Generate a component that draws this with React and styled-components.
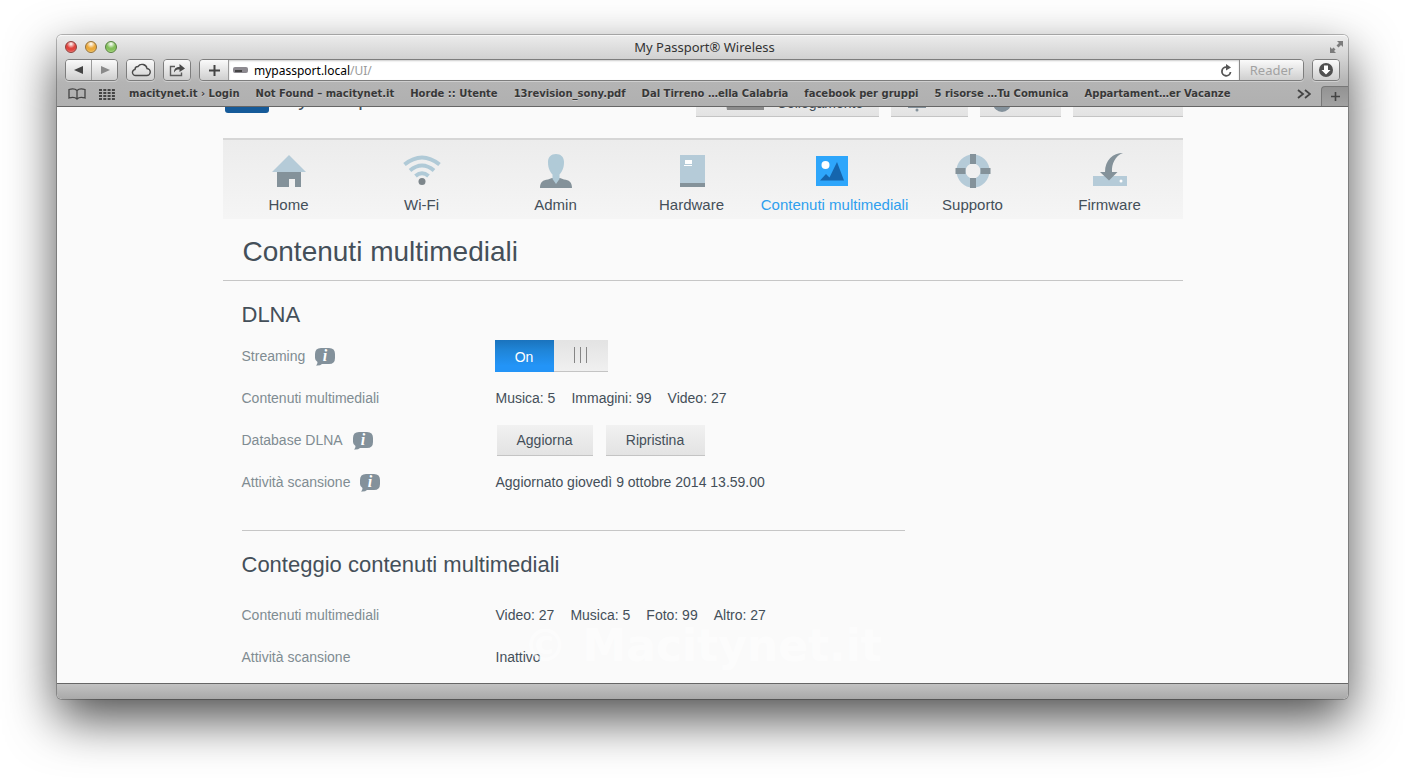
import React, { useState } from 'react';
import styled, { createGlobalStyle } from 'styled-components';

const GlobalStyle = createGlobalStyle`
  * {
    box-sizing: border-box;
  }
  body {
    margin: 0;
    background: #fff;
    font-family: "Liberation Sans", Arial, sans-serif;
    overflow: hidden;
  }
  button, input {
    font: inherit;
    color: inherit;
  }
`;

const Desktop = styled.div`
  min-height: 100vh;
  padding: 35px 57px 79px;
`;

const Window = styled.div`
  border-radius: 5px;
  background: #fafafa;
  box-shadow: 0 0 0 1px rgba(0, 0, 0, 0.25), 0 20px 50px rgba(0, 0, 0, 0.7);
`;

const Chrome = styled.header`
  border-radius: 5px 5px 0 0;
  border-top: 1px solid #f8f8f8;
  border-bottom: 1px solid #666;
  background: linear-gradient(#ebebeb 0, #d0d0d0 24px, #b4b4b4 46px, #b0b0b0 100%);
  font-family: "Lucida Grande", "Noto Sans", sans-serif;
  color: #333;
`;

const TitleBar = styled.div`
  display: grid;
  grid-template-columns: 1fr auto 1fr;
  align-items: center;
  height: 22px;
  padding: 0 4px 0 8px;
`;

const Lights = styled.div`
  display: flex;
  gap: 8px;
`;

const Light = styled.button`
  width: 12px;
  height: 12px;
  padding: 0;
  border: 1px solid ${(p) => p.$edge};
  border-radius: 50%;
  background: radial-gradient(circle at 50% 20%, #fff 0, ${(p) => p.$color} 45%, ${(p) => p.$color} 65%, ${(p) => p.$glow} 100%);
`;

const WindowTitle = styled.h1`
  margin: 0;
  font-size: 13px;
  font-weight: 400;
  line-height: 18px;
`;

const FullScreen = styled.button`
  justify-self: end;
  display: flex;
  padding: 0;
  border: 0;
  background: none;
`;

const Toolbar = styled.div`
  display: flex;
  gap: 8px;
  height: 24px;
  padding: 1px 8px;
`;

const ButtonGroup = styled.div`
  display: flex;
  border: 1px solid #7d7d7d;
  border-radius: 4px;
  overflow: hidden;
  box-shadow: 0 1px 0 #cfcfcf;
`;

const ToolButton = styled.button`
  display: flex;
  align-items: center;
  justify-content: center;
  width: ${(p) => p.$width || 27}px;
  padding: 0;
  border: 0;
  border-right: ${(p) => (p.$divided ? '1px solid #9a9a9a' : '0')};
  background: linear-gradient(#fafafa, #cfcfcf);
`;

const AddressGroup = styled(ButtonGroup)`
  flex: 1;
`;

const Address = styled.label`
  flex: 1;
  display: flex;
  align-items: center;
  padding: 0 7px 0 4px;
  background: #fff;
  box-shadow: inset 0 1px 2px #ccc;
  font-size: 12px;
  color: #9a9a9a;
`;

const AddressInput = styled.input`
  field-sizing: content;
  margin-left: 6px;
  padding: 0;
  border: 0;
  outline: 0;
  background: none;
  color: #000;
`;

const Reload = styled.button`
  display: flex;
  margin-left: auto;
  padding: 0;
  border: 0;
  background: none;
`;

const Reader = styled(ToolButton)`
  border-left: 1px solid #8a8a8a;
  font-size: 13px;
  color: #a2a2a2;
`;

const Bookmarks = styled.nav`
  display: flex;
  align-items: center;
  height: 24px;
  padding-left: 11px;
`;

const BookmarkIcons = styled.div`
  display: flex;
  align-items: center;
  gap: 13px;
  margin-right: 14px;
`;

const BookmarkList = styled.div`
  flex: 1;
  display: flex;
  gap: 16px;
  min-width: 0;
  white-space: nowrap;
`;

const Bookmark = styled.a`
  font-family: "Lucida Grande", "DejaVu Sans", sans-serif;
  font-size: 10px;
  font-weight: 700;
  line-height: 16px;
  color: #383838;
  text-decoration: none;
  text-shadow: 0 1px 0 rgba(255, 255, 255, 0.35);
`;

const IconButton = styled.button`
  display: flex;
  padding: 0;
  border: 0;
  background: none;
`;

const NewTab = styled.button`
  align-self: flex-end;
  display: flex;
  align-items: center;
  justify-content: center;
  width: 27px;
  height: 20px;
  margin-left: 10px;
  padding: 0;
  border: solid #777;
  border-width: 1px 0 0 1px;
  border-radius: 4px 0 0 0;
  background: linear-gradient(#939393, #a2a2a2);
`;

const Viewport = styled.main`
  overflow: hidden;
  position: relative;
  color: #444f59;
`;

const Page = styled.div`
  max-width: 960px;
  margin: -22px auto 0;
  padding-bottom: 5px;
`;

const PageHeader = styled.div`
  display: flex;
  align-items: flex-end;
  height: 32px;
  margin-bottom: 21px;
`;

const Logo = styled.div`
  width: 44px;
  height: 28px;
  margin: 0 13px 4px 2px;
  border-radius: 3px;
  background: #155a99;
`;

const Product = styled.div`
  font-size: 20px;
  line-height: 24px;
  margin-bottom: 6px;
`;

const HeaderActions = styled.div`
  display: flex;
  gap: 12px;
  margin-left: auto;
`;

const PanelButton = styled.button`
  display: flex;
  align-items: center;
  justify-content: center;
  gap: 13px;
  width: ${(p) => p.$width}px;
  height: 31px;
  padding: 0;
  border: 0;
  border-bottom: 1px solid #c4c4c4;
  background: linear-gradient(#f1f1f1, #e3e3e3);
  font-size: 14px;
`;

const HeaderButton = styled(PanelButton)`
  padding-top: 4px;
`;

const Tabs = styled.nav`
  display: grid;
  grid-template-columns: 132fr 134fr 134fr 138fr 148fr 128fr 146fr;
  border-top: 2px solid #d6d6d6;
  background: linear-gradient(#ececec, #f5f5f5);
`;

const Tab = styled.a`
  display: flex;
  flex-direction: column;
  align-items: center;
  gap: 7px;
  padding: 12px 0 5px;
  font-size: 15px;
  line-height: 19px;
  white-space: nowrap;
  text-decoration: none;
  color: ${(p) => (p.$active ? '#2f9fee' : '#444f59')};
`;

const PageTitle = styled.h2`
  margin: 0;
  padding: 17px 20px 12px;
  border-bottom: 1px solid #c6c6c6;
  font-size: 28px;
  font-weight: 400;
  line-height: 32px;
`;

const Section = styled.section`
  margin-left: 19px;
  padding-top: 21px;
`;

const SectionTitle = styled.h3`
  margin: 0 0 ${(p) => p.$space}px;
  font-size: 22px;
  font-weight: 400;
  line-height: 26px;
`;

const Row = styled.div`
  display: grid;
  grid-template-columns: 253px 1fr;
  align-items: center;
  height: 42px;
  font-size: 14px;
  line-height: 20px;
`;

const Label = styled.div`
  display: flex;
  align-items: center;
  gap: 10px;
  color: #808c92;
`;

const Value = styled.div`
  display: flex;
  gap: 16px;
  padding-left: 1px;
`;

const Actions = styled.div`
  display: flex;
  gap: 13px;
  padding-left: 2px;
`;

const Divider = styled.hr`
  width: 663px;
  margin: 27px 0 0 19px;
  border: 0;
  border-top: 1px solid #c6c6c6;
`;

const Switch = styled.label`
  position: relative;
  display: flex;
  width: 113px;
  height: 32px;
  flex-direction: ${(p) => (p.$on ? 'row' : 'row-reverse')};
`;

const SwitchInput = styled.input`
  position: absolute;
  inset: 0;
  width: 100%;
  height: 100%;
  margin: 0;
  opacity: 0;
`;

const SwitchText = styled.span`
  width: 59px;
  background: linear-gradient(#1a73bd, #1f84d6 30%, #2394f7 80%);
  color: #fff;
  line-height: 34px;
  text-align: center;
`;

const SwitchHandle = styled.span`
  flex: 1;
  display: flex;
  justify-content: center;
  gap: 5px;
  padding-top: 7px;
  border-bottom: 1px solid #c4c4c4;
  background: linear-gradient(#e3e3e3, #f0f0f0);
`;

const Grip = styled.i`
  width: 1px;
  height: 16px;
  background: #858585;
`;

const StatusBar = styled.footer`
  height: 16px;
  border-top: 1px solid #666;
  border-radius: 0 0 5px 5px;
  background: linear-gradient(#c2c2c2, #a9a9a9);
`;

const Watermark = styled.div`
  position: absolute;
  left: 0;
  right: 0;
  bottom: 9px;
  text-align: center;
  font-family: Verdana, "DejaVu Sans", sans-serif;
  font-size: 44px;
  font-weight: 700;
  line-height: 56px;
  color: rgba(255, 255, 255, 0.6);
  pointer-events: none;
`;

const Glyph = ({ w, h, children }) => (
  <svg width={w} height={h} viewBox={`0 0 ${w} ${h}`} aria-hidden="true">{children}</svg>
);

const HomeIcon = () => (
  <Glyph w={34} h={36}>
    <path d="M17 3 34 20H0z" fill="#b5cbd8" />
    <path d="M5 20h24v15h-6v-8h-6v8H5z" fill="#84929a" />
  </Glyph>
);

const WifiIcon = () => (
  <Glyph w={38} h={36}>
    <g fill="none" stroke="#b0cad7" strokeWidth="4">
      <path d="M1.500 12.500Q19-1.500 36.500 12.500" />
      <path d="M7 18.500Q19 8.500 31 18.500" />
      <path d="M12.500 24Q19 18.500 25.500 24" />
    </g>
    <circle cx="19" cy="29.500" r="3.500" fill="#7d868b" />
  </Glyph>
);

const AdminIcon = () => (
  <Glyph w={34} h={36}>
    <path d="M1 36c0-6 3-8 8-8.500l4-1.500h8l4 1.500c5 .5 8 2.500 8 8.500z" fill="#84929a" />
    <path d="M17 2c5 0 8 3 8 8 0 6-2 10-4.500 12.500V27L17 32l-3.500-5v-4.500C11 20 9 16 9 10c0-5 3-8 8-8z" fill="#b0cad7" />
  </Glyph>
);

const HardwareIcon = () => (
  <Glyph w={26} h={36}>
    <path d="M1 3h25v28H1z" fill="#b5cbd8" />
    <path d="M1 31h25v4H1z" fill="#84929a" />
    <path d="M6 8h7v4H6zM5 13h8v1H5z" fill="#fff" />
  </Glyph>
);

const MediaIcon = () => (
  <Glyph w={38} h={36}>
    <path d="M0 4h32v30H0z" fill="#2ea6fb" />
    <path d="M4 28.500 10 22l3.500 3.500L21 10l7 18.500z" fill="#1565ad" />
    <circle cx="9.500" cy="13" r="4" fill="#fff" />
  </Glyph>
);

const SupportIcon = () => (
  <Glyph w={36} h={36}>
    <circle cx="18" cy="19" r="12" fill="none" stroke="#b5cbd8" strokeWidth="9" />
    <path d="M15 2h6v10h-6zM15 26h6v10h-6zM.500 16h10v6h-10zM25.500 16h10v6h-10z" fill="#84929a" />
  </Glyph>
);

const FirmwareIcon = () => (
  <Glyph w={34} h={36}>
    <path d="M0 24h34v10H0z" fill="#b5cbd8" />
    <path d="M30 1C20 1 12 8 12 20H7l9 8.500L24.500 20H19C18.500 12 22 4 30 1z" fill="#84929a" />
    <circle cx="28" cy="29" r="1.500" fill="#fff" />
  </Glyph>
);

const InfoIcon = () => (
  <Glyph w={20} h={19}>
    <path d="M6 1h8q6 0 6 6v4q0 6-6 6H7q-2 2-6 1.500 1.500-1 1.500-3.500Q0 13.500 0 11V7q0-6 6-6z" fill="#83919b" />
    <text x="10" y="14" textAnchor="middle" fontFamily="Liberation Serif, serif" fontStyle="italic" fontWeight="700" fontSize="16" fill="#fff">i</text>
  </Glyph>
);

const tabs = [
  { name: 'Home', Icon: HomeIcon },
  { name: 'Wi-Fi', Icon: WifiIcon },
  { name: 'Admin', Icon: AdminIcon },
  { name: 'Hardware', Icon: HardwareIcon },
  { name: 'Contenuti multimediali', Icon: MediaIcon, active: true },
  { name: 'Supporto', Icon: SupportIcon },
  { name: 'Firmware', Icon: FirmwareIcon },
];

const bookmarks = [
  'macitynet.it › Login',
  'Not Found – macitynet.it',
  'Horde :: Utente',
  '13revision_sony.pdf',
  'Dal Tirreno …ella Calabria',
  'facebook per gruppi',
  '5 risorse …Tu Comunica',
  'Appartament…er Vacanze',
];

const BrowserChrome = () => (
  <Chrome>
    <TitleBar>
      <Lights>
        <Light aria-label="Close" $color="#e0453f" $glow="#ffaaa5" $edge="#8d3f3c" />
        <Light aria-label="Minimize" $color="#eba93c" $glow="#ffeb9c" $edge="#94713a" />
        <Light aria-label="Zoom" $color="#84c05c" $glow="#d8ffb0" $edge="#56803f" />
      </Lights>
      <WindowTitle>My Passport® Wireless</WindowTitle>
      <FullScreen aria-label="Full screen">
        <Glyph w={15} h={14}>
          <path d="M8 1h6v6l-2-2-2.500 2.500-2-2L10 3zM1 7l2 2 1.500-1.500 2 2L5 11l2 2H1z" fill="#7c7c7c" />
        </Glyph>
      </FullScreen>
    </TitleBar>
    <Toolbar>
      <ButtonGroup>
        <ToolButton aria-label="Back" $width={26} $divided>
          <Glyph w={10} h={10}><path d="M9 1v8L0 5z" fill="#444" /></Glyph>
        </ToolButton>
        <ToolButton aria-label="Forward" $width={25}>
          <Glyph w={10} h={10}><path d="M1 1v8l9-4z" fill="#8a8a8a" /></Glyph>
        </ToolButton>
      </ButtonGroup>
      <ButtonGroup>
        <ToolButton aria-label="iCloud">
          <Glyph w={20} h={14}>
            <path d="M5 12.500h10.500a3.500 3.500 0 0 0 .5-7A5 5 0 0 0 7 3.500 3 3 0 0 0 4 6.500a3 3 0 0 0 1 6z" fill="none" stroke="#4a4a4a" strokeWidth="1.400" />
          </Glyph>
        </ToolButton>
      </ButtonGroup>
      <ButtonGroup>
        <ToolButton aria-label="Share" $width={26}>
          <Glyph w={18} h={14}>
            <path d="M7 3.500H2.500v9h11V9.500" fill="none" stroke="#5c5c5c" strokeWidth="1.400" />
            <path d="M6 9.500C6 5.500 8 4 11.500 4V1L17 5.500 11.500 9V6.500C9 6.500 7.500 7 6 9.500z" fill="#4a4a4a" />
          </Glyph>
        </ToolButton>
      </ButtonGroup>
      <AddressGroup>
        <ToolButton aria-label="Add bookmark" $width={29} $divided>
          <Glyph w={11} h={11}><path d="M5.500 0v11M0 5.500h11" stroke="#444" strokeWidth="2" /></Glyph>
        </ToolButton>
        <Address>
          <Glyph w={15} h={6}>
            <rect width="15" height="6" rx="2" fill="#8d8a90" />
            <path d="M2 4h7" stroke="#444" strokeWidth="2" />
          </Glyph>
          <AddressInput aria-label="Address" defaultValue="mypassport.local" />
          <span>/UI/</span>
          <Reload aria-label="Reload">
            <Glyph w={12} h={13}>
              <path d="M10.500 8A4.300 4.300 0 1 1 6.500 3.200" fill="none" stroke="#555" strokeWidth="1.800" />
              <path d="M6 0l5 3.500L6 6.500z" fill="#555" />
            </Glyph>
          </Reload>
        </Address>
        <Reader $width={64}>Reader</Reader>
      </AddressGroup>
      <ButtonGroup>
        <ToolButton aria-label="Downloads" $width={26}>
          <Glyph w={14} h={14}>
            <circle cx="7" cy="7" r="7" fill="#505050" />
            <path d="M5 2.500h4V7h2.500L7 11.500 2.500 7H5z" fill="#fff" />
          </Glyph>
        </ToolButton>
      </ButtonGroup>
    </Toolbar>
    <Bookmarks>
      <BookmarkIcons>
        <IconButton aria-label="Bookmarks">
          <Glyph w={18} h={12}>
            <path d="M9 2.500C7 .500 4 .500 1 1.500V10c3-1 6-1 8 1 2-2 5-2 8-1V1.500c-3-1-6-1-8 1zV11" fill="none" stroke="#444" strokeWidth="1.300" />
          </Glyph>
        </IconButton>
        <IconButton aria-label="Top sites">
          <Glyph w={16} h={11}>
            <path d="M0 1h16M0 4h16M0 7h16M0 10h16" stroke="#444" strokeWidth="2" strokeDasharray="3 1.300" />
          </Glyph>
        </IconButton>
      </BookmarkIcons>
      <BookmarkList>
        {bookmarks.map((name) => (
          <Bookmark key={name} href="#">{name}</Bookmark>
        ))}
      </BookmarkList>
      <IconButton aria-label="More bookmarks">
        <Glyph w={14} h={10}><path d="M1 1l5 4-5 4M8 1l5 4-5 4" fill="none" stroke="#444" strokeWidth="1.800" /></Glyph>
      </IconButton>
      <NewTab aria-label="New tab">
        <Glyph w={9} h={9}><path d="M4.500 0v9M0 4.500h9" stroke="#444" strokeWidth="1.600" /></Glyph>
      </NewTab>
    </Bookmarks>
  </Chrome>
);

const Info = ({ about }) => (
  <IconButton aria-label={about}>
    <InfoIcon />
  </IconButton>
);

const App = () => {
  const [streaming, setStreaming] = useState(true);

  return (
    <Desktop>
      <GlobalStyle />
      <Window>
        <BrowserChrome />
        <Viewport>
          <Page>
            <PageHeader>
              <Logo />
              <Product>My Passport Wireless</Product>
              <HeaderActions>
                <HeaderButton $width={183}>
                  <Glyph w={53} h={14}>
                    <path d="M0 9h17v2H6z" fill="#b4b4b4" />
                    <path d="M14 2h39v12H16z" fill="#8c8c8c" />
                  </Glyph>
                  Collegamento
                </HeaderButton>
                <HeaderButton $width={77} aria-label="Avvisi">
                  <Glyph w={44} h={18}>
                    <path d="M1 13h18v1H1z" fill="#83919b" />
                    <path d="M4 13q2-2 2-7a4 4 0 0 1 8 0q0 5 2 7z" fill="#83919b" />
                    <circle cx="10" cy="16" r="1.500" fill="#83919b" />
                  </Glyph>
                </HeaderButton>
                <HeaderButton $width={81} aria-label="Guida">
                  <Glyph w={56} h={20}><circle cx="10" cy="10" r="9" fill="#83919b" /></Glyph>
                </HeaderButton>
                <HeaderButton $width={110} aria-label="Lingua" />
              </HeaderActions>
            </PageHeader>
            <Tabs>
              {tabs.map(({ name, Icon, active }) => (
                <Tab key={name} href="#" $active={active}>
                  <Icon />
                  {name}
                </Tab>
              ))}
            </Tabs>
            <PageTitle>Contenuti multimediali</PageTitle>
            <Section>
              <SectionTitle $space={7}>DLNA</SectionTitle>
              <Row>
                <Label>
                  <label htmlFor="streaming">Streaming</label>
                  <Info about="Informazioni su Streaming" />
                </Label>
                <Switch $on={streaming}>
                  <SwitchInput
                    id="streaming"
                    type="checkbox"
                    role="switch"
                    checked={streaming}
                    onChange={(e) => setStreaming(e.target.checked)}
                  />
                  <SwitchText>{streaming ? 'On' : 'Off'}</SwitchText>
                  <SwitchHandle>
                    <Grip />
                    <Grip />
                    <Grip />
                  </SwitchHandle>
                </Switch>
              </Row>
              <Row>
                <Label>Contenuti multimediali</Label>
                <Value>
                  <span>Musica: 5</span>
                  <span>Immagini: 99</span>
                  <span>Video: 27</span>
                </Value>
              </Row>
              <Row>
                <Label>
                  Database DLNA
                  <Info about="Informazioni su Database DLNA" />
                </Label>
                <Actions>
                  <PanelButton $width={96}>Aggiorna</PanelButton>
                  <PanelButton $width={99}>Ripristina</PanelButton>
                </Actions>
              </Row>
              <Row>
                <Label>
                  Attività scansione
                  <Info about="Informazioni su Attività scansione" />
                </Label>
                <Value>Aggiornato giovedì 9 ottobre 2014 13.59.00</Value>
              </Row>
            </Section>
            <Divider />
            <Section>
              <SectionTitle $space={16}>Conteggio contenuti multimediali</SectionTitle>
              <Row>
                <Label>Contenuti multimediali</Label>
                <Value>
                  <span>Video: 27</span>
                  <span>Musica: 5</span>
                  <span>Foto: 99</span>
                  <span>Altro: 27</span>
                </Value>
              </Row>
              <Row>
                <Label>Attività scansione</Label>
                <Value>Inattivo</Value>
              </Row>
            </Section>
          </Page>
          <Watermark>© Macitynet.it</Watermark>
        </Viewport>
        <StatusBar />
      </Window>
    </Desktop>
  );
};

export default App;
